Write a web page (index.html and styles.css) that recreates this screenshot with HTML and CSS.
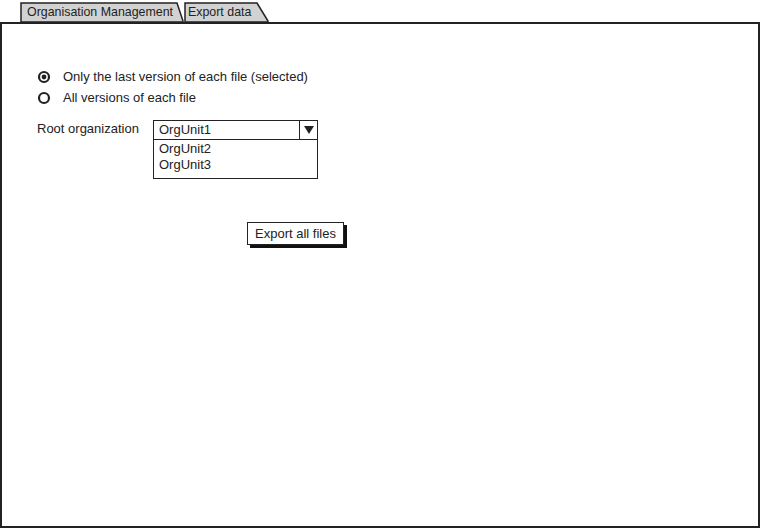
FILE: index.html
```html
<!DOCTYPE html>
<html>
<head>
<meta charset="utf-8">
<link rel="stylesheet" href="styles.css">
</head>
<body>
<div class="tabs">
  <div class="tab tab-1">
    <svg class="tab-shape" width="164" height="20" viewBox="0 0 164 20"><polygon points="1,20 1,1 157,1 163,19 163,20" fill="#d2d2d2" stroke="#222" stroke-width="1.5"/></svg>
    <span class="tab-label">Organisation Management</span>
  </div>
  <div class="tab tab-2">
    <svg class="tab-shape" width="86" height="20" viewBox="0 0 86 20"><polygon points="1,20 1,1 73,1 84,19 84,20" fill="#d2d2d2" stroke="#222" stroke-width="1.5"/></svg>
    <span class="tab-label">Export data</span>
  </div>
</div>
<div class="frame">
  <div class="options">
    <div class="radio-row">
      <svg class="radio" width="14" height="14" viewBox="0 0 14 14"><circle cx="7" cy="7" r="5" fill="none" stroke="#222" stroke-width="2.2"/><circle cx="7" cy="7" r="2.4" fill="#222"/></svg>
      <span>Only the last version of each file (selected)</span>
    </div>
    <div class="radio-row">
      <svg class="radio" width="14" height="14" viewBox="0 0 14 14"><circle cx="7" cy="7" r="5" fill="none" stroke="#222" stroke-width="2.2"/></svg>
      <span>All versions of each file</span>
    </div>
  </div>
  <div class="field-row">
    <div class="field-label">Root organization</div>
    <div class="combo">
      <div class="combo-box">
        <span class="combo-value">OrgUnit1</span>
        <span class="combo-arrow"><svg width="10" height="8" viewBox="0 0 10 8"><polygon points="0,0 10,0 5,8" fill="#222"/></svg></span>
      </div>
      <div class="combo-list">
        <div class="combo-item">OrgUnit2</div>
        <div class="combo-item">OrgUnit3</div>
      </div>
    </div>
  </div>
  <div class="actions">
    <button class="btn">Export all files</button>
  </div>
</div>
</body>
</html>
```
FILE: styles.css
```css
html, body {
  margin: 0;
  padding: 0;
  background: #fff;
}
body {
  width: 761px;
  height: 530px;
  font-family: "Liberation Sans", Arial, sans-serif;
  font-size: 13px;
  color: #222;
  overflow: hidden;
}
.tabs {
  display: flex;
  align-items: flex-end;
  height: 22px;
  padding-left: 20px;
}
.tab {
  position: relative;
  height: 20px;
}
.tab-1 { width: 164px; }
.tab-2 { width: 86px; }
.tab-shape {
  position: absolute;
  left: 0;
  top: 0;
}
.tab-label {
  position: relative;
  display: block;
  padding-left: 7px;
  line-height: 20px;
  font-size: 12.4px;
  color: #222;
  white-space: nowrap;
}
.tab-2 .tab-label { padding-left: 4px; }
.frame {
  box-sizing: border-box;
  width: 760px;
  height: 506px;
  border: 2px solid #222;
  padding-top: 44px;
  padding-left: 35px;
}
.options {
  display: flex;
  flex-direction: column;
  gap: 4px;
}
.radio-row {
  display: flex;
  align-items: center;
  height: 17px;
  gap: 12px;
}
.radio {
  flex: none;
}
.field-row {
  display: flex;
  align-items: flex-start;
  margin-top: 14px;
}
.field-label {
  width: 116px;
  padding-top: 1px;
  line-height: 16px;
}
.combo {
  width: 165px;
}
.combo-box {
  box-sizing: border-box;
  display: flex;
  height: 20px;
  border: 1.5px solid #222;
}
.combo-value {
  flex: 1;
  padding-left: 5px;
  line-height: 17px;
}
.combo-arrow {
  width: 17px;
  border-left: 1.5px solid #222;
  display: flex;
  align-items: center;
  justify-content: center;
}
.combo-list {
  box-sizing: border-box;
  height: 39px;
  border: 1.5px solid #222;
  border-top: none;
  padding-top: 1px;
}
.combo-item {
  padding-left: 5px;
  line-height: 16px;
}
.actions {
  margin-top: 43px;
  padding-left: 210px;
}
.btn {
  box-sizing: border-box;
  height: 23px;
  width: 97px;
  padding: 0;
  margin: 0;
  font-family: inherit;
  font-size: 13px;
  color: #222;
  background: #fff;
  border: 1.5px solid #222;
  border-radius: 0;
  box-shadow: 3px 3px 0 #111;
}
```
